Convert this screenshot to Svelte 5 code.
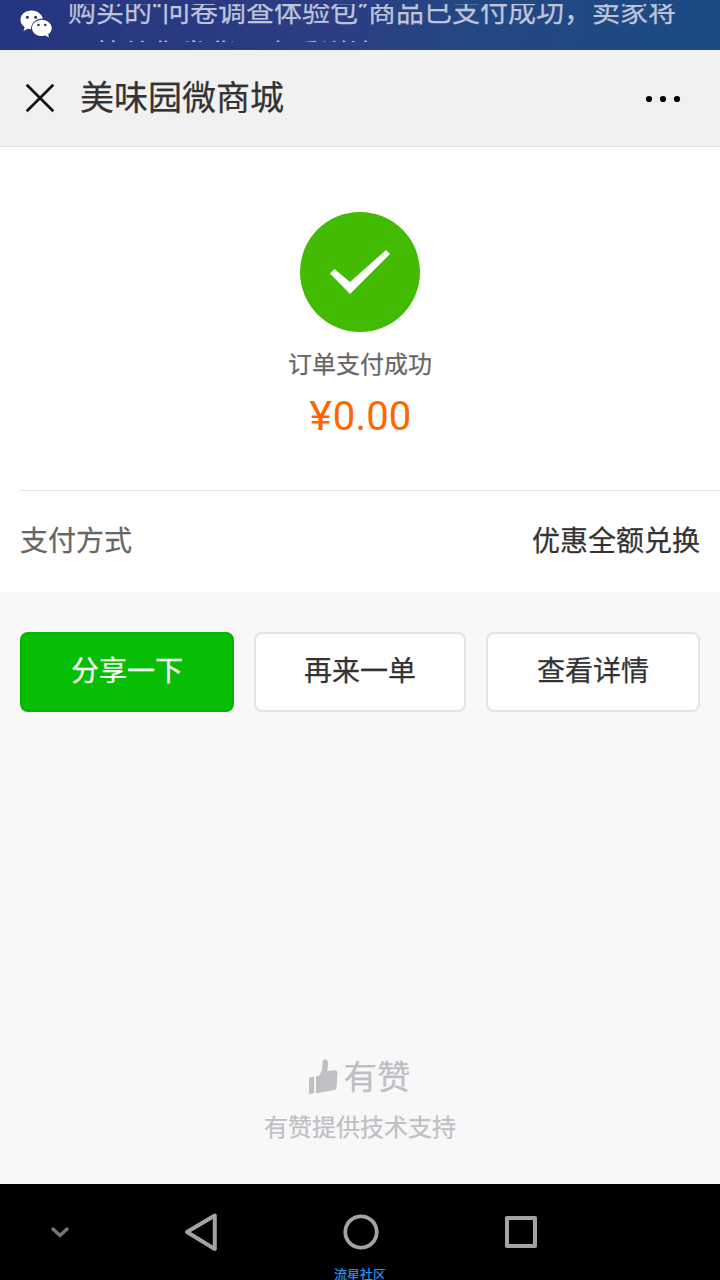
<script>
    const notice = {
        current: '购买的“问卷调查体验包”商品已支付成功，卖家将',
        next: '尽快给您发货。查看详情'
    };
    const order = {
        shop: '美味园微商城',
        status: '订单支付成功',
        currency: '¥',
        amount: '0.00',
        method: '优惠全额兑换'
    };
    const actions = [
        { label: '分享一下', primary: true },
        { label: '再来一单', primary: false },
        { label: '查看详情', primary: false }
    ];
</script>

<div class="screen">
    <div class="status-bar">
        <svg class="wechat" width="34" height="30" viewBox="0 0 34 30">
            <path fill="#fff" d="M12.500 1.500C6.300 1.500 1.500 5.600 1.500 10.700c0 3 1.500 5.500 4.100 7.300L4.500 22l4.200-2.200c1.200.3 2.200.4 3.300.4C12 14 17.500 9.400 24 9.600C22.500 4.700 18 1.500 12.500 1.500z" />
            <path fill="#fff" d="M22.900 10.700c-5.500 0-9.900 3.700-9.900 8.200s4.400 8.200 9.900 8.200c1.200 0 2.400-.2 3.500-.5l3.600 2-.9-3.200c2.200-1.500 3.600-3.800 3.600-6.500c0-4.500-4.400-8.200-9.800-8.200z" />
            <circle cx="8.300" cy="8.200" r="1.500" fill="#27357f" />
            <circle cx="16.600" cy="8.200" r="1.500" fill="#27357f" />
            <circle cx="19.500" cy="16" r="1.300" fill="#27357f" />
            <circle cx="26.300" cy="16" r="1.300" fill="#27357f" />
        </svg>
        <div class="ticker">
            <div class="ticker-line">{notice.current}</div>
            <div class="ticker-line">{notice.next}</div>
        </div>
    </div>

    <header class="title-bar">
        <svg class="close" width="30" height="30" viewBox="0 0 30 30">
            <path d="M1.700 1.700L28.300 28.300M28.300 1.700L1.700 28.300" stroke="#111" stroke-width="2.700" />
        </svg>
        <h1 class="title">{order.shop}</h1>
        <svg class="more" width="36" height="8" viewBox="0 0 36 8">
            <circle cx="4" cy="4" r="3.100" />
            <circle cx="18" cy="4" r="3.100" />
            <circle cx="32" cy="4" r="3.100" />
        </svg>
    </header>

    <main class="content">
        <section class="result">
            <svg width="120" height="120" viewBox="0 0 120 120">
                <circle cx="60" cy="60" r="60" fill="#43bb02" />
                <path fill="#fff" d="M30 61.500L34.500 57L50 70L86 38L90 42L50 82z" />
            </svg>
            <div class="status">{order.status}</div>
            <div class="amount"><span class="currency">{order.currency}</span>{order.amount}</div>
        </section>
        <section class="method">
            <span class="method-label">支付方式</span>
            <span>{order.method}</span>
        </section>
    </main>

    <div class="actions">
        {#each actions as action}
            <button class="btn" class:primary={action.primary}>{action.label}</button>
        {/each}
    </div>

    <footer class="footer">
        <div class="brand">
            <svg width="30" height="36" viewBox="0 0 30 36">
                <path fill="#c0bfc4" d="M1.500 18.500L5.800 17.800Q6.200 17.800 6.200 18.300V34L2 35Q1 35.200 1 34.200V19.200Q1 18.600 1.500 18.500z" />
                <path fill="#c0bfc4" d="M8 17.500L11.500 16.500C13.500 13 14.500 9 14.500 4.500C14.500 1.500 15.500.3 17.200.3C19 .3 20 2 20 4.500C20 7.500 19.600 9.500 19.300 12L27 11.300C28.700 11.200 29.600 12.200 29.500 13.800L28.600 28C28.500 29.800 27.600 30.800 26 31L8 34.200z" />
            </svg>
            <span>有赞</span>
        </div>
        <div class="support">有赞提供技术支持</div>
    </footer>

    <nav class="nav-bar">
        <svg width="720" height="96" viewBox="0 0 720 96" fill="none" stroke-linejoin="round" stroke-linecap="round">
            <path d="M53 45L60 51.500L67 45" stroke="#757575" stroke-width="3.500" />
            <path d="M187 48L214.800 31.500V65z" stroke="#a3a3a3" stroke-width="4" />
            <circle cx="361" cy="48" r="15.700" stroke="#a3a3a3" stroke-width="3.800" />
            <rect x="507" y="34" width="28" height="28" stroke="#a3a3a3" stroke-width="4" />
        </svg>
        <span class="watermark">流星社区</span>
    </nav>
</div>

<style>
:global(body) {
    margin: 0;
    background: #f8f8f8;
}
.screen {
    width: 720px;
    height: 1280px;
    display: flex;
    flex-direction: column;
    overflow: hidden;
    background: #f8f8f8;
    color: #333;
    font-family: Roboto, "Noto Sans CJK SC", sans-serif;
    -webkit-text-stroke: 0.25px currentColor;
}
.status-bar {
    height: 50px;
    flex: none;
    box-sizing: border-box;
    display: flex;
    align-items: flex-start;
    padding: 4px 0 0 19px;
    background: linear-gradient(100deg, #24347e 0%, #2c3d84 45%, #244783 65%, #1b4a84 100%);
}
.wechat {
    margin: 5px 15px 0 0;
}
/* the notice is caught while it scrolls to its second line */
.ticker {
    height: 38px;
    overflow: hidden;
    color: #bec4da;
    font-size: 28px;
    white-space: nowrap;
}
.ticker-line {
    height: 44px;
    line-height: 44px;
}
.ticker-line:first-child {
    margin: -13px 0 -1px;
}
.title-bar {
    height: 97px;
    flex: none;
    box-sizing: border-box;
    display: flex;
    align-items: center;
    padding: 0 39px 0 25px;
    background: #f1f1f1;
    border-bottom: 1px solid #dedede;
}
.title {
    flex: 1;
    margin: 0 0 0 25px;
    font-size: 34px;
    font-weight: 400;
    line-height: 48px;
}
.more {
    margin-top: 2px;
}
.content {
    height: 445px;
    flex: none;
    background: #fff;
}
.result {
    height: 343px;
    box-sizing: border-box;
    padding-top: 65px;
    display: flex;
    flex-direction: column;
    align-items: center;
}
.status {
    margin-top: 15px;
    font-size: 24px;
    line-height: 36px;
    color: #666;
}
.amount {
    display: flex;
    margin-top: 10px;
    font-size: 40px;
    line-height: 48px;
    color: #f60;
    letter-spacing: 0.2px;
    -webkit-text-stroke: 0;
}
.currency {
    transform: scaleX(1.08);
    margin: 0 1px 0 2px;
}
.method {
    height: 102px;
    box-sizing: border-box;
    margin-left: 20px;
    padding: 0 20px 5px 0;
    display: flex;
    align-items: center;
    justify-content: space-between;
    border-top: 1px solid #e5e5e5;
    font-size: 28px;
}
.method-label {
    color: #666;
}
.actions {
    display: grid;
    grid-template-columns: 214px 212px 214px;
    gap: 20px;
    padding: 40px 20px 0;
}
.btn {
    height: 80px;
    padding: 0 0 6px;
    border: 2px solid #e5e5e5;
    border-radius: 8px;
    background: #fff;
    color: #333;
    font-family: inherit;
    font-size: 28px;
}
.btn.primary {
    background: #06bf04;
    border-color: #03b401;
    color: #fff;
}
.footer {
    margin-top: auto;
    height: 127px;
    display: flex;
    flex-direction: column;
    align-items: center;
    color: #c0bfc4;
}
.brand {
    display: flex;
    align-items: center;
    gap: 6px;
    height: 40px;
    margin-right: 2px;
    font-size: 33.500px;
    line-height: 42px;
}
.brand span {
    padding-top: 2px;
}
.support {
    margin-top: 13px;
    font-size: 24px;
    line-height: 36px;
}
.nav-bar {
    position: relative;
    height: 96px;
    flex: none;
    background: #000;
}
.nav-bar svg {
    display: block;
}
.watermark {
    position: absolute;
    left: 334px;
    top: 82px;
    font-size: 13px;
    line-height: 18px;
    color: #2196f3;
}
</style>
